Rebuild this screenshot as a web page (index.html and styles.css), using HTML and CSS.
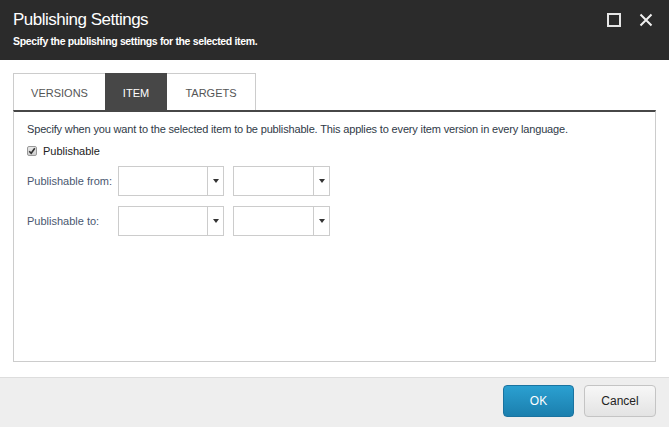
FILE: index.html
```html
<!DOCTYPE html>
<html>
<head>
<meta charset="utf-8">
<link rel="stylesheet" href="styles.css">
</head>
<body>
<div class="dialog">
  <div class="header">
    <div class="titles">
      <div class="title">Publishing Settings</div>
      <div class="subtitle">Specify the publishing settings for the selected item.</div>
    </div>
    <div class="win-icons">
      <svg class="icon" width="14" height="14" viewBox="0 0 14 14"><rect x="1" y="1" width="12" height="12" fill="none" stroke="#e6e6e6" stroke-width="2"/></svg>
      <svg class="icon" width="14" height="14" viewBox="0 0 14 14"><path d="M1.5 1.5 L12.5 12.5 M12.5 1.5 L1.5 12.5" stroke="#f0f0f0" stroke-width="2"/></svg>
    </div>
  </div>
  <div class="main">
    <div class="tabs">
      <div class="tab tab-first">VERSIONS</div>
      <div class="tab tab-active">ITEM</div>
      <div class="tab tab-last">TARGETS</div>
    </div>
    <div class="panel">
      <div class="desc">Specify when you want to the selected item to be publishable. This applies to every item version in every language.</div>
      <label class="check-row">
        <span class="checkbox"><svg width="8" height="8" viewBox="0 0 8 8"><path d="M1.2 4.2 L3.2 6.3 L6.8 1.2" fill="none" stroke="#333" stroke-width="1.6"/></svg></span>
        <span>Publishable</span>
      </label>
      <div class="field-row">
        <div class="field-label">Publishable from:</div>
        <div class="select select-date"><span class="select-value"></span><span class="select-arrow"></span></div>
        <div class="select select-time"><span class="select-value"></span><span class="select-arrow"></span></div>
      </div>
      <div class="field-row">
        <div class="field-label">Publishable to:</div>
        <div class="select select-date"><span class="select-value"></span><span class="select-arrow"></span></div>
        <div class="select select-time"><span class="select-value"></span><span class="select-arrow"></span></div>
      </div>
    </div>
  </div>
  <div class="footer">
    <button class="btn btn-primary">OK</button>
    <button class="btn btn-default">Cancel</button>
  </div>
</div>
</body>
</html>
```

FILE: styles.css
```css
* { box-sizing: border-box; }
html, body { margin: 0; padding: 0; }
body {
  font-family: "Liberation Sans", Arial, sans-serif;
  background: #fff;
  color: #333;
}
.dialog {
  width: 669px;
  height: 427px;
  display: flex;
  flex-direction: column;
}
.header {
  height: 60px;
  flex: none;
  background: #2b2b2b;
  color: #fff;
  display: flex;
  justify-content: space-between;
  align-items: flex-start;
  padding: 0 16px 0 13px;
}
.titles { padding-top: 9px; }
.title {
  font-size: 17px;
  line-height: 22px;
  letter-spacing: -0.5px;
}
.subtitle {
  font-size: 10.5px;
  line-height: 14px;
  margin-top: 3px;
  font-weight: bold;
  letter-spacing: -0.35px;
}
.win-icons {
  display: flex;
  gap: 18px;
  padding-top: 13px;
}
.icon { display: block; }
.main {
  flex: 1;
  display: flex;
  flex-direction: column;
  padding: 13px 13px 15px 13px;
}
.tabs {
  display: flex;
  height: 37px;
  flex: none;
}
.tab {
  font-size: 11px;
  color: #555;
  display: flex;
  align-items: center;
  justify-content: center;
  border-top: 1px solid #ccc;
  padding-top: 1px;
}
.tab-first { width: 92px; border-left: 1px solid #ccc; }
.tab-active { width: 62px; background: #474747; color: #fff; border-top-color: #474747; }
.tab-last { width: 89px; border-right: 1px solid #ccc; }
.panel {
  flex: 1;
  border: 1px solid #ccc;
  border-top: 2px solid #474747;
  padding: 10px 13px 0 13px;
  font-size: 11px;
}
.desc {
  line-height: 14px;
  color: #2f3a47;
  letter-spacing: -0.16px;
}
.check-row {
  display: flex;
  align-items: center;
  gap: 6px;
  margin-top: 8px;
  height: 14px;
  color: #222;
}
.checkbox {
  width: 10px;
  height: 10px;
  border: 1px solid #999;
  border-radius: 2px;
  background: linear-gradient(#e8e8e8, #cfcfcf);
  display: flex;
  align-items: center;
  justify-content: center;
}
.checkbox svg { display: block; }
.field-row {
  display: flex;
  align-items: center;
  margin-top: 8px;
  height: 30px;
}
.field-row + .field-row { margin-top: 10px; }
.field-label {
  width: 91px;
  color: #4a5870;
}
.select {
  height: 30px;
  border: 1px solid #ccc;
  display: flex;
  background: #fff;
}
.select-date { width: 106px; margin-right: 9px; }
.select-time { width: 97px; }
.select-value { flex: 1; }
.select-arrow {
  width: 16px;
  border-left: 1px solid #ccc;
  position: relative;
}
.select-arrow::after {
  content: "";
  position: absolute;
  left: 5px;
  top: 12px;
  border-left: 3px solid transparent;
  border-right: 3px solid transparent;
  border-top: 4px solid #333;
}
.footer {
  height: 50px;
  flex: none;
  background: #eeeeee;
  border-top: 1px solid #dddddd;
  display: flex;
  justify-content: flex-end;
  align-items: flex-start;
  gap: 10px;
  padding: 7px 13px 0 0;
}
.btn {
  width: 72px;
  height: 32px;
  border-radius: 4px;
  font-family: "Liberation Sans", Arial, sans-serif;
  font-size: 12px;
  padding: 0;
  cursor: pointer;
}
.btn-primary {
  background: linear-gradient(#2ba0d1, #1b7fae);
  border: 1px solid #1a73a0;
  color: #fff;
  width: 71px;
}
.btn-default {
  background: linear-gradient(#f7f7f7, #e3e3e3);
  border: 1px solid #c4c4c4;
  color: #222;
}
```
